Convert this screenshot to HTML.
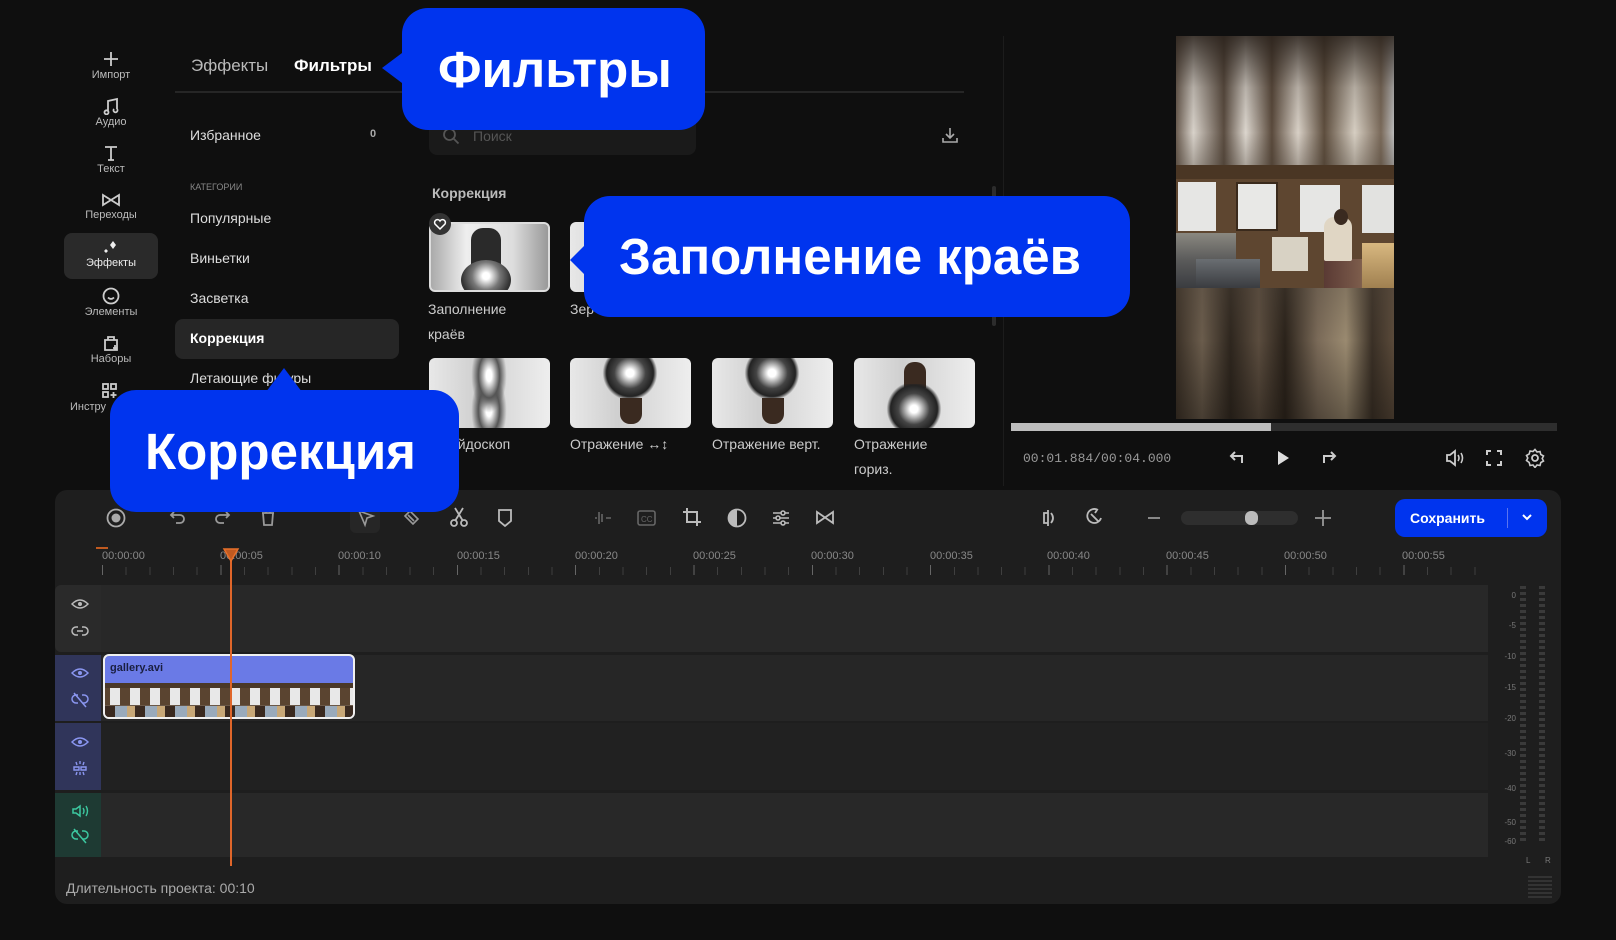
<!DOCTYPE html>
<html><head><meta charset="utf-8"><style>
*{margin:0;padding:0;box-sizing:border-box}
body{width:1616px;height:940px;background:#0f0f0f;font-family:"Liberation Sans","DejaVu Sans",sans-serif;color:#ddd;position:relative;overflow:hidden}
.a{position:absolute}
.side{width:60px;text-align:center;font-size:11px;color:#bbb;left:81px}
.side svg{display:block;margin:0 auto 1px}
.cat{left:190px;font-size:14px;color:#ddd}
.th{width:121px;height:70px;border-radius:6px;background:linear-gradient(90deg,#e8e8e8,#cfcfcf 40%,#eee);overflow:hidden}
.lbl{font-size:14px;color:#ccc;line-height:25px}
.bub{background:#0034ee;color:#fff;font-weight:bold;border-radius:26px;display:flex;align-items:center}
.tl{font-size:11px;color:#888}
.ic{stroke:#aaa;fill:none;stroke-width:1.8}
</style></head><body>

<!-- sidebar -->
<div class="a" style="left:64px;top:233px;width:94px;height:46px;background:#2a2a2a;border-radius:8px"></div>
<div class="a side" style="top:50px"><svg width="18" height="18" class="ic"><path d="M9 2v14M2 9h14" stroke="#ccc"/></svg>Импорт</div>
<div class="a side" style="top:97px"><svg width="18" height="18" class="ic"><path d="M6 14V4l9-2v10M6 14a2 2 0 1 1-3 0 2 2 0 0 1 3 0zM15 12a2 2 0 1 1-3 0" stroke="#ccc"/></svg>Аудио</div>
<div class="a side" style="top:144px"><svg width="18" height="18" class="ic"><path d="M3 3h12M9 3v13M6 16h6" stroke="#ccc"/></svg>Текст</div>
<div class="a side" style="top:192px"><svg width="20" height="16" class="ic"><path d="M2 3l16 10V3L2 13z" stroke="#ccc"/></svg>Переходы</div>
<div class="a side" style="top:240px;color:#eee"><svg width="20" height="16"><path d="M12 1l3 4-3 4-3-4zM5 9l2 2-2 2-2-2z" fill="#eee"/></svg>Эффекты</div>
<div class="a side" style="top:287px"><svg width="20" height="18" class="ic"><circle cx="10" cy="9" r="7.5" stroke="#ccc"/><path d="M7 10.5q3 3 6 0" stroke="#ccc"/></svg>Элементы</div>
<div class="a side" style="top:334px"><svg width="20" height="18" class="ic"><path d="M4 6h12v10H4zM7 6V3h6v3M14 11v5M12 14h4" stroke="#ccc"/></svg>Наборы</div>
<div class="a side" style="top:382px;left:70px;text-align:left">
<svg width="20" height="18" class="ic" style="margin-left:30px"><rect x="3" y="2" width="5" height="5" stroke="#ccc"/><rect x="11" y="2" width="5" height="5" stroke="#ccc"/><rect x="3" y="10" width="5" height="5" stroke="#ccc"/><path d="M13.5 10v6M10.5 13h6" stroke="#ccc"/></svg>Инстру</div>

<!-- tabs -->
<div class="a" style="left:191px;top:56px;font-size:17px;color:#bbb">Эффекты</div>
<div class="a" style="left:294px;top:56px;font-size:17px;color:#fff;font-weight:bold">Фильтры</div>
<div class="a" style="left:175px;top:91px;width:789px;height:2px;background:#262626"></div>

<div class="a cat" style="top:127px">Избранное</div>
<div class="a" style="left:370px;top:128px;font-size:11px;color:#aaa;font-weight:bold">0</div>
<div class="a" style="left:190px;top:182px;font-size:9px;color:#888">КАТЕГОРИИ</div>
<div class="a cat" style="top:210px">Популярные</div>
<div class="a cat" style="top:250px">Виньетки</div>
<div class="a cat" style="top:290px">Засветка</div>
<div class="a" style="left:175px;top:319px;width:224px;height:40px;background:#262626;border-radius:8px"></div>
<div class="a cat" style="top:330px;font-weight:bold;color:#fff">Коррекция</div>
<div class="a cat" style="top:370px">Летающие фигуры</div>

<!-- search -->
<div class="a" style="left:429px;top:115px;width:267px;height:40px;background:#1a1a1a;border-radius:8px"></div>
<svg class="a" style="left:442px;top:127px" width="18" height="18"><circle cx="7.5" cy="7.5" r="5.5" stroke="#555" stroke-width="1.8" fill="none"/><path d="M11.5 11.5l5 5" stroke="#555" stroke-width="1.8"/></svg>
<div class="a" style="left:473px;top:128px;font-size:14px;color:#555">Поиск</div>
<svg class="a" style="left:940px;top:125px" width="20" height="20"><path d="M10 3v10M6 9l4 4 4-4M3 13v4h14v-4" stroke="#aaa" stroke-width="1.6" fill="none"/></svg>
<div class="a" style="left:432px;top:185px;font-size:14px;font-weight:bold;color:#bbb">Коррекция</div>
<div class="a" style="left:992px;top:186px;width:4px;height:140px;background:#2c2c2c;border-radius:2px"></div>
<div class="a" style="left:1003px;top:36px;width:1px;height:450px;background:#1c1c1c"></div>

<!-- thumbs row1 -->
<div class="a th" style="left:429px;top:222px;border:2px solid #ddd;background:linear-gradient(90deg,#aaa,#eee 30%,#ddd 70%,#999)">
 <div class="a" style="left:40px;top:4px;width:30px;height:40px;background:#2a2a2a;border-radius:12px 12px 0 0"></div>
 <div class="a" style="left:30px;top:36px;width:50px;height:40px;background:radial-gradient(circle at 50% 40%,#fff 10%,#777 40%,#333 70%);border-radius:50%"></div>
</div>
<div class="a" style="left:429px;top:213px;width:22px;height:22px;border-radius:50%;background:#333"></div>
<svg class="a" style="left:433px;top:218px" width="14" height="13"><path d="M7 11L2 6a2.5 2.5 0 0 1 5-3 2.5 2.5 0 0 1 5 3z" stroke="#fff" fill="none" stroke-width="1.5"/></svg>
<div class="a th" style="left:570px;top:222px"></div>
<div class="a lbl" style="left:428px;top:297px">Заполнение<br>краёв</div>
<div class="a lbl" style="left:570px;top:297px">Зер</div>

<!-- row2 -->
<div class="a th" style="left:429px;top:358px"><div class="a" style="left:35px;top:0;width:50px;height:70px;background:radial-gradient(ellipse at 50% 25%,#fff 8%,#555 30%,transparent 50%),radial-gradient(ellipse at 50% 75%,#fff 8%,#555 30%,transparent 50%)"></div></div>
<div class="a th" style="left:570px;top:358px"><div class="a" style="left:30px;top:-10px;width:60px;height:50px;background:radial-gradient(circle,#fff 10%,#444 40%,#222 60%,transparent 70%)"></div><div class="a" style="left:50px;top:40px;width:22px;height:26px;background:#3a2a20;border-radius:0 0 10px 10px"></div></div>
<div class="a th" style="left:712px;top:358px"><div class="a" style="left:30px;top:-10px;width:60px;height:50px;background:radial-gradient(circle,#fff 10%,#444 40%,#222 60%,transparent 70%)"></div><div class="a" style="left:50px;top:40px;width:22px;height:26px;background:#3a2a20;border-radius:0 0 10px 10px"></div></div>
<div class="a th" style="left:854px;top:358px"><div class="a" style="left:50px;top:4px;width:22px;height:26px;background:#3a2a20;border-radius:10px 10px 0 0"></div><div class="a" style="left:30px;top:26px;width:60px;height:50px;background:radial-gradient(circle,#fff 10%,#444 40%,#222 60%,transparent 70%)"></div></div>
<div class="a lbl" style="left:450px;top:432px">ейдоскоп</div>
<div class="a lbl" style="left:570px;top:432px">Отражение ↔↕</div>
<div class="a lbl" style="left:712px;top:432px">Отражение верт.</div>
<div class="a lbl" style="left:854px;top:432px">Отражение<br>гориз.</div>

<!-- preview -->
<div class="a" style="left:1176px;top:36px;width:218px;height:129px;background:linear-gradient(90deg,#6a5c50,#d8d2ca 8%,#5a4c40 22%,#dcd6ce 32%,#5a4a3c 44%,#d8d0c6 56%,#5e4e3e 68%,#d6cec2 82%,#7a6a5a 94%,#bbb)"></div>
<div class="a" style="left:1176px;top:36px;width:218px;height:129px;background:linear-gradient(180deg,rgba(40,32,26,.85),rgba(40,32,26,.2) 40%,transparent 75%,rgba(60,50,40,.3))"></div>
<div class="a" style="left:1176px;top:288px;width:218px;height:131px;background:linear-gradient(90deg,#3a3026,#6a5c4c 12%,#2e261e 25%,#5a4c3e 38%,#2a221a 50%,#7a6a58 65%,#9a8a70 78%,#3a3026 90%,#5a4a3a)"></div>
<div class="a" style="left:1176px;top:288px;width:218px;height:131px;background:linear-gradient(180deg,rgba(80,70,60,.3),transparent 40%,rgba(20,16,12,.4))"></div>
<div class="a" style="left:1176px;top:165px;width:218px;height:123px;background:#5e4630;overflow:hidden">
 <div class="a" style="left:0;top:0;width:218px;height:14px;background:#4a3624"></div>
 <div class="a" style="left:2px;top:17px;width:38px;height:49px;background:#e6e6e4"></div>
 <div class="a" style="left:60px;top:17px;width:42px;height:49px;background:#e8e8e6;border:2px solid #3a2a1c"></div>
 <div class="a" style="left:124px;top:20px;width:40px;height:47px;background:#e6e6e4"></div>
 <div class="a" style="left:186px;top:20px;width:32px;height:48px;background:#e2e2e0"></div>
 <div class="a" style="left:96px;top:72px;width:36px;height:34px;background:#d8d2c4"></div>
 <div class="a" style="left:0;top:68px;width:60px;height:55px;background:linear-gradient(180deg,#8a8880,#5a5a5a 50%,#3a3c40)"></div>
 <div class="a" style="left:20px;top:94px;width:64px;height:29px;background:linear-gradient(180deg,#6a6e72,#3a3c40)"></div>
 <div class="a" style="left:148px;top:94px;width:70px;height:29px;background:linear-gradient(90deg,#5a3a34,#7a5a4a 50%,#c8a870)"></div>
 <div class="a" style="left:186px;top:78px;width:32px;height:45px;background:linear-gradient(180deg,#d8b880,#a08050)"></div>
 <div class="a" style="left:148px;top:52px;width:28px;height:44px;background:#e0d6c4;border-radius:10px 10px 2px 2px"></div>
 <div class="a" style="left:158px;top:44px;width:14px;height:16px;background:#3a2a20;border-radius:50%"></div>
</div>
<div class="a" style="left:1011px;top:423px;width:546px;height:8px;background:#2e2e2e"></div>
<div class="a" style="left:1011px;top:423px;width:260px;height:8px;background:#bdbdbd"></div>
<div class="a" style="left:1023px;top:451px;font-family:'Liberation Mono',monospace;font-size:13px;color:#999">00:01.884/00:04.000</div>
<svg class="a" style="left:1226px;top:447px" width="22" height="22"><path d="M16 16V9H6M9 5L5 9l4 4" stroke="#ccc" stroke-width="2" fill="none"/></svg>
<svg class="a" style="left:1274px;top:449px" width="18" height="18"><path d="M4 2l11 7-11 7z" fill="#ddd"/></svg>
<svg class="a" style="left:1318px;top:447px" width="22" height="22"><path d="M6 16V9h10M13 5l4 4-4 4" stroke="#ccc" stroke-width="2" fill="none"/></svg>
<svg class="a" style="left:1444px;top:448px" width="22" height="20"><path d="M3 7h3l5-4v14l-5-4H3z" stroke="#ccc" stroke-width="1.8" fill="none"/><path d="M14 7q2 3 0 6M17 5q3 5 0 10" stroke="#ccc" stroke-width="1.6" fill="none"/></svg>
<svg class="a" style="left:1485px;top:449px" width="18" height="18"><path d="M2 6V2h4M12 2h4v4M16 12v4h-4M6 16H2v-4" stroke="#ccc" stroke-width="2" fill="none"/></svg>
<svg class="a" style="left:1525px;top:448px" width="20" height="20"><circle cx="10" cy="10" r="3" stroke="#ccc" stroke-width="1.8" fill="none"/><path d="M10 1.5l2 2.5 3-.5.8 3 2.7 1.5-1.3 2.5 1.3 2.5-2.7 1.5-.8 3-3-.5-2 2.5-2-2.5-3 .5-.8-3L1.5 12.5 2.8 10 1.5 7.5l2.7-1.5.8-3 3 .5z" stroke="#ccc" stroke-width="1.6" fill="none"/></svg>

<!-- timeline panel -->
<div class="a" style="left:55px;top:490px;width:1506px;height:414px;background:#1e1e1e;border-radius:12px"></div>
<svg class="a" style="left:105px;top:507px" width="22" height="22"><circle cx="11" cy="11" r="8.5" stroke="#aaa" stroke-width="1.8" fill="none"/><circle cx="11" cy="11" r="4.5" fill="#aaa"/></svg>
<svg class="a" style="left:168px;top:508px" width="20" height="20"><path d="M6 4L3 7l3 3M3 7h9a4 4 0 0 1 0 8H8" stroke="#999" stroke-width="1.8" fill="none"/></svg>
<svg class="a" style="left:212px;top:508px" width="20" height="20"><path d="M14 4l3 3-3 3M17 7H8a4 4 0 0 0 0 8h4" stroke="#999" stroke-width="1.8" fill="none"/></svg>
<svg class="a" style="left:258px;top:508px" width="20" height="20"><path d="M4 5h12M8 5V3h4v2M5 5l1 12h8l1-12" stroke="#999" stroke-width="1.8" fill="none"/></svg>
<div class="a" style="left:350px;top:503px;width:30px;height:30px;background:#262626;border-radius:6px"></div>
<svg class="a" style="left:356px;top:508px" width="20" height="20"><path d="M3 3l14 5-6 2-2 7z" stroke="#999" stroke-width="1.6" fill="none"/></svg>
<svg class="a" style="left:401px;top:508px" width="20" height="20"><path d="M4 8l5-5 8 8-5 5zM7 7l6 6" stroke="#999" stroke-width="1.6" fill="none"/></svg>
<svg class="a" style="left:449px;top:506px" width="20" height="22"><circle cx="5" cy="17" r="3" stroke="#bbb" stroke-width="1.8" fill="none"/><circle cx="15" cy="17" r="3" stroke="#bbb" stroke-width="1.8" fill="none"/><path d="M6 15L14 2M14 15L6 2" stroke="#bbb" stroke-width="1.8"/></svg>
<svg class="a" style="left:495px;top:507px" width="20" height="22"><path d="M4 3h12v11l-6 5-6-5z" stroke="#bbb" stroke-width="1.8" fill="none"/></svg>
<svg class="a" style="left:592px;top:508px" width="22" height="20"><path d="M3 10h2M7 4v12M10 6v8M14 10h5" stroke="#666" stroke-width="1.6"/></svg>
<svg class="a" style="left:636px;top:508px" width="22" height="20"><rect x="2" y="3" width="17" height="14" rx="2" stroke="#666" stroke-width="1.6" fill="none"/><text x="5" y="14" font-size="8" fill="#666" font-family="Liberation Sans">CC</text></svg>
<svg class="a" style="left:681px;top:506px" width="22" height="22"><path d="M6 2v14h14M2 6h14v14" stroke="#bbb" stroke-width="2" fill="none"/></svg>
<svg class="a" style="left:726px;top:507px" width="22" height="22"><circle cx="11" cy="11" r="8.5" stroke="#bbb" stroke-width="1.8" fill="none"/><path d="M11 3a8 8 0 0 0 0 16z" fill="#bbb"/></svg>
<svg class="a" style="left:770px;top:507px" width="22" height="22"><path d="M3 6h16M3 11h16M3 16h16" stroke="#bbb" stroke-width="1.6"/><circle cx="13" cy="6" r="2" fill="#1e1e1e" stroke="#bbb" stroke-width="1.6"/><circle cx="8" cy="11" r="2" fill="#1e1e1e" stroke="#bbb" stroke-width="1.6"/><circle cx="13" cy="16" r="2" fill="#1e1e1e" stroke="#bbb" stroke-width="1.6"/></svg>
<svg class="a" style="left:815px;top:507px" width="22" height="22"><path d="M2 5l16 11V5L2 16z" stroke="#bbb" stroke-width="1.8" fill="none"/></svg>
<svg class="a" style="left:1038px;top:507px" width="22" height="22"><path d="M10 3v16M10 6H6v10h4M13 6q4 5 0 10" stroke="#bbb" stroke-width="1.8" fill="none"/></svg>
<svg class="a" style="left:1083px;top:506px" width="22" height="22"><path d="M15 4a7 7 0 1 0 3 8M8 8l7 7M12 7l2-3" stroke="#bbb" stroke-width="1.8" fill="none"/></svg>
<div class="a" style="left:1148px;top:517px;width:12px;height:2px;background:#888"></div>
<div class="a" style="left:1181px;top:511px;width:117px;height:14px;background:#2e2e2e;border-radius:7px"></div>
<div class="a" style="left:1245px;top:511px;width:13px;height:14px;background:#bbb;border-radius:6px"></div>
<svg class="a" style="left:1313px;top:508px" width="20" height="20"><path d="M10 2v16M2 10h16" stroke="#999" stroke-width="1.8"/></svg>
<div class="a" style="left:1395px;top:499px;width:152px;height:38px;background:#0034ee;border-radius:10px"></div>
<div class="a" style="left:1410px;top:510px;font-size:14px;font-weight:bold;color:#fff">Сохранить</div>
<div class="a" style="left:1507px;top:508px;width:1px;height:20px;background:#5a74f0"></div>
<svg class="a" style="left:1521px;top:512px" width="12" height="10"><path d="M2 3l4 4 4-4" stroke="#fff" stroke-width="2" fill="none"/></svg>

<!-- ruler -->
<div class="a" style="left:96px;top:547px;width:12px;height:2px;background:#c05a20"></div>
<div class="a tl" style="left:102px;top:550px">00:00:00</div>
<div class="a tl" style="left:220px;top:550px">00:00:05</div>
<div class="a tl" style="left:338px;top:550px">00:00:10</div>
<div class="a tl" style="left:457px;top:550px">00:00:15</div>
<div class="a tl" style="left:575px;top:550px">00:00:20</div>
<div class="a tl" style="left:693px;top:550px">00:00:25</div>
<div class="a tl" style="left:811px;top:550px">00:00:30</div>
<div class="a tl" style="left:930px;top:550px">00:00:35</div>
<div class="a tl" style="left:1047px;top:550px">00:00:40</div>
<div class="a tl" style="left:1166px;top:550px">00:00:45</div>
<div class="a tl" style="left:1284px;top:550px">00:00:50</div>
<div class="a tl" style="left:1402px;top:550px">00:00:55</div>
<div class="a" style="left:102px;top:567px;width:1380px;height:8px;background:repeating-linear-gradient(90deg,#555 0 1px,transparent 1px 23.66px);opacity:.6"></div>
<div class="a" style="left:102px;top:565px;width:1380px;height:10px;background:repeating-linear-gradient(90deg,#666 0 1px,transparent 1px 118.3px)"></div>

<!-- tracks -->
<div class="a" style="left:55px;top:585px;width:46px;height:67px;background:#2a2a2a;border-radius:6px 0 0 6px"></div>
<div class="a" style="left:101px;top:585px;width:1387px;height:67px;background:#282828"></div>
<div class="a" style="left:55px;top:655px;width:46px;height:66px;background:#30355a"></div>
<div class="a" style="left:101px;top:655px;width:1387px;height:66px;background:#262626"></div>
<div class="a" style="left:55px;top:723px;width:46px;height:67px;background:#30355a"></div>
<div class="a" style="left:101px;top:723px;width:1387px;height:67px;background:#212121"></div>
<div class="a" style="left:55px;top:793px;width:46px;height:64px;background:#1e3a33"></div>
<div class="a" style="left:101px;top:793px;width:1387px;height:64px;background:#282828"></div>
<svg class="a" style="left:71px;top:598px" width="18" height="12"><path d="M1 6q8-8 16 0-8 8-16 0z" stroke="#bbb" stroke-width="1.5" fill="#2a2a2a"/><circle cx="9" cy="6" r="2" fill="#bbb"/></svg>
<svg class="a" style="left:71px;top:624px" width="18" height="14"><path d="M7 3H5a4 4 0 0 0 0 8h2M11 3h2a4 4 0 0 1 0 8h-2M6 7h6" stroke="#bbb" stroke-width="1.5" fill="none"/></svg>
<svg class="a" style="left:71px;top:667px" width="18" height="12"><path d="M1 6q8-8 16 0-8 8-16 0z" stroke="#8a96f0" stroke-width="1.5" fill="#30355a"/><circle cx="9" cy="6" r="2" fill="#8a96f0"/></svg>
<svg class="a" style="left:71px;top:692px" width="18" height="16"><path d="M7 3H5a4 4 0 0 0 0 8h2M11 3h2a4 4 0 0 1 0 8h-2M3 1l12 14" stroke="#8a96f0" stroke-width="1.5" fill="none"/></svg>
<svg class="a" style="left:71px;top:736px" width="18" height="12"><path d="M1 6q8-8 16 0-8 8-16 0z" stroke="#8a96f0" stroke-width="1.5" fill="#30355a"/><circle cx="9" cy="6" r="2" fill="#8a96f0"/></svg>
<svg class="a" style="left:72px;top:760px" width="16" height="16"><path d="M2 7h5v3H2zM9 7h5v3H9zM8 1v3M4 2l1 3M12 2l-1 3M8 12v3M4 15l1-3M12 15l-1-3" stroke="#8a96f0" stroke-width="1.4" fill="none"/></svg>
<svg class="a" style="left:71px;top:804px" width="18" height="14"><path d="M2 5h3l4-3v10l-4-3H2z" stroke="#3cc8a0" stroke-width="1.5" fill="none"/><path d="M12 4q2 3 0 6M15 2q3 5 0 10" stroke="#3cc8a0" stroke-width="1.4" fill="none"/></svg>
<svg class="a" style="left:71px;top:828px" width="18" height="16"><path d="M7 3H5a4 4 0 0 0 0 8h2M11 3h2a4 4 0 0 1 0 8h-2M3 1l12 14" stroke="#3cc8a0" stroke-width="1.5" fill="none"/></svg>

<!-- clip -->
<div class="a" style="left:103px;top:654px;width:252px;height:65px;border:2px solid #f0f0f0;border-radius:6px;background:#6a7ae6;overflow:hidden">
 <div class="a" style="left:5px;top:6px;font-size:11px;font-weight:bold;color:#1a1f40">gallery.avi</div>
 <div class="a" style="left:0;top:27px;width:250px;height:36px;background:linear-gradient(180deg,#4a3828 0 5px,transparent 5px 22px,#6a5848 22px),repeating-linear-gradient(90deg,#5a4430 0 5px,#e8e8e8 5px 15px,#5a4430 15px 20px)"></div>
 <div class="a" style="left:0;top:50px;width:250px;height:13px;background:repeating-linear-gradient(90deg,#3a2a20 0 10px,#9ab 10px 22px,#c8a878 22px 30px)"></div>
</div>

<!-- playhead -->
<div class="a" style="left:230px;top:555px;width:2px;height:311px;background:#e0662a"></div>
<svg class="a" style="left:222px;top:547px" width="18" height="16"><path d="M2 2h14L9 14z" fill="#c05a20" stroke="#e8702a" stroke-width="1.5"/></svg>

<!-- meter -->
<div class="a" style="left:1520px;top:586px;width:6px;height:256px;background:repeating-linear-gradient(180deg,#3a3a3a 0 3px,transparent 3px 6px)"></div>
<div class="a" style="left:1539px;top:586px;width:6px;height:256px;background:repeating-linear-gradient(180deg,#3a3a3a 0 3px,transparent 3px 6px)"></div>
<div class="a" style="left:1492px;top:592px;font-size:8px;color:#777;line-height:1;text-align:right;width:24px">
<div style="position:absolute;right:0;top:0">0</div><div style="position:absolute;right:0;top:30px">-5</div><div style="position:absolute;right:0;top:61px">-10</div><div style="position:absolute;right:0;top:92px">-15</div><div style="position:absolute;right:0;top:123px">-20</div><div style="position:absolute;right:0;top:158px">-30</div><div style="position:absolute;right:0;top:193px">-40</div><div style="position:absolute;right:0;top:227px">-50</div><div style="position:absolute;right:0;top:246px">-60</div></div>
<div class="a" style="left:1526px;top:856px;font-size:8px;color:#777">L</div>
<div class="a" style="left:1545px;top:856px;font-size:8px;color:#777">R</div>
<div class="a" style="left:1528px;top:876px;width:24px;height:22px;background:repeating-linear-gradient(180deg,#333 0 2px,transparent 2px 4px)"></div>

<div class="a" style="left:66px;top:880px;font-size:14px;color:#aaa">Длительность проекта: 00:10</div>

<!-- callouts -->
<svg class="a" style="left:380px;top:50px" width="26" height="36"><path d="M26 0L2 18l24 18z" fill="#0034ee"/></svg>
<div class="a bub" style="left:402px;top:8px;width:303px;height:122px;padding-left:36px;font-size:51px">Фильтры</div>
<svg class="a" style="left:568px;top:242px" width="20" height="36"><path d="M20 0L2 18l18 18z" fill="#0034ee"/></svg>
<div class="a bub" style="left:584px;top:196px;width:546px;height:121px;padding-left:35px;font-size:51px">Заполнение краёв</div>
<svg class="a" style="left:266px;top:366px" width="36" height="26"><path d="M0 26L18 2l18 24z" fill="#0034ee"/></svg>
<div class="a bub" style="left:110px;top:390px;width:349px;height:122px;padding-left:35px;font-size:51px">Коррекция</div>
</body></html>
